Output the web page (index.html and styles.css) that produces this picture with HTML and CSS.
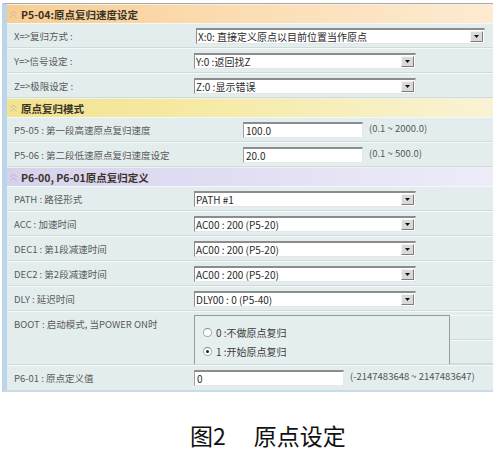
FILE: index.html
```html
<!DOCTYPE html>
<html>
<head>
<meta charset="utf-8">
<link rel="stylesheet" href="styles.css">
</head>
<body>
<div class="panel">
  <div class="hdr hdr-orange"><svg class="chev" width="7" height="8" viewBox="0 0 7 8"><polyline points="0.5,4 3.5,1 6.5,4" /><polyline points="0.5,7.5 3.5,4.5 6.5,7.5" /></svg>P5-04:原点复归速度设定</div>
  <div class="row"><div class="lbl">X=&gt;复归方式 :</div><div class="sel sel-wide"><span class="val">X:0: 直接定义原点以目前位置当作原点</span><span class="btn"><svg width="5" height="3" viewBox="0 0 5 3"><polygon points="0,0 5,0 2.5,3"/></svg></span></div></div>
  <div class="row"><div class="lbl">Y=&gt;信号设定 :</div><div class="sel"><span class="val">Y:0 :返回找Z</span><span class="btn"><svg width="5" height="3" viewBox="0 0 5 3"><polygon points="0,0 5,0 2.5,3"/></svg></span></div></div>
  <div class="row"><div class="lbl">Z=&gt;极限设定 :</div><div class="sel"><span class="val">Z:0 :显示错误</span><span class="btn"><svg width="5" height="3" viewBox="0 0 5 3"><polygon points="0,0 5,0 2.5,3"/></svg></span></div></div>
  <div class="hdr hdr-yellow"><svg class="chev" width="7" height="8" viewBox="0 0 7 8"><polyline points="0.5,4 3.5,1 6.5,4" /><polyline points="0.5,7.5 3.5,4.5 6.5,7.5" /></svg>原点复归模式</div>
  <div class="row"><div class="lbl lbl-long">P5-05 : 第一段高速原点复归速度</div><div class="inp inp-short">100.0</div><div class="range">(0.1 ~ 2000.0)</div></div>
  <div class="row"><div class="lbl lbl-long">P5-06 : 第二段低速原点复归速度设定</div><div class="inp inp-short">20.0</div><div class="range">(0.1 ~ 500.0)</div></div>
  <div class="hdr hdr-lav"><svg class="chev" width="7" height="8" viewBox="0 0 7 8"><polyline points="0.5,4 3.5,1 6.5,4" /><polyline points="0.5,7.5 3.5,4.5 6.5,7.5" /></svg>P6-00, P6-01原点复归定义</div>
  <div class="row"><div class="lbl">PATH : 路径形式</div><div class="sel"><span class="val">PATH #1</span><span class="btn"><svg width="5" height="3" viewBox="0 0 5 3"><polygon points="0,0 5,0 2.5,3"/></svg></span></div></div>
  <div class="row"><div class="lbl">ACC : 加速时间</div><div class="sel"><span class="val">AC00 : 200 (P5-20)</span><span class="btn"><svg width="5" height="3" viewBox="0 0 5 3"><polygon points="0,0 5,0 2.5,3"/></svg></span></div></div>
  <div class="row"><div class="lbl">DEC1 : 第1段减速时间</div><div class="sel"><span class="val">AC00 : 200 (P5-20)</span><span class="btn"><svg width="5" height="3" viewBox="0 0 5 3"><polygon points="0,0 5,0 2.5,3"/></svg></span></div></div>
  <div class="row"><div class="lbl">DEC2 : 第2段减速时间</div><div class="sel"><span class="val">AC00 : 200 (P5-20)</span><span class="btn"><svg width="5" height="3" viewBox="0 0 5 3"><polygon points="0,0 5,0 2.5,3"/></svg></span></div></div>
  <div class="row"><div class="lbl">DLY : 延迟时间</div><div class="sel"><span class="val">DLY00 : 0 (P5-40)</span><span class="btn"><svg width="5" height="3" viewBox="0 0 5 3"><polygon points="0,0 5,0 2.5,3"/></svg></span></div></div>
  <div class="row row-boot">
    <div class="lbl lbl-top">BOOT : 启动模式, 当POWER ON时</div>
    <div class="group">
      <div class="opt"><span class="radio"></span>0 :不做原点复归</div>
      <div class="opt"><span class="radio on"></span>1 :开始原点复归</div>
    </div>
    <div class="filler"><div class="fcell"></div><div class="fcell"></div></div>
  </div>
  <div class="row row-last"><div class="lbl">P6-01 : 原点定义值</div><div class="inp inp-mid">0</div><div class="range">(-2147483648 ~ 2147483647)</div></div>
</div>
<div class="caption">图2<span class="gap"></span>原点设定</div>
</body>
</html>
```

FILE: styles.css
```css
html, body {
  margin: 0;
  padding: 0;
  background: #ffffff;
}

body {
  width: 498px;
  height: 452px;
  overflow: hidden;
  font-family: "Noto Sans CJK SC", "DejaVu Sans", sans-serif;
}

.panel {
  margin: 3px 5px 0 2px;
  border-left: 5px solid #bcd5ea;
  border-top: 1px solid #a9a9a9;
  border-bottom: 2px solid #c9dcea;
  background: #e3eded;
}

.hdr {
  height: 19px;
  display: flex;
  align-items: center;
  padding-left: 3px;
  font-size: 10.5px;
  font-weight: bold;
  color: #3a3328;
  box-sizing: border-box;
  border-top: 1px solid #f5f0e6;
}

.chev {
  margin-right: 4px;
  fill: none;
  stroke: #c8b8a0;
  stroke-width: 1;
}

.hdr-orange {
  background: linear-gradient(to right, #f8cd92 0%, #fbdcb0 45%, #fdebd2 100%);
}

.hdr-yellow {
  background: linear-gradient(to right, #f2e390 0%, #f6eba8 45%, #f9f3d4 100%);
}

.hdr-lav {
  background: linear-gradient(to right, #d6d2ee 0%, #e2dff4 50%, #eeecf9 100%);
}

.hdr-lav .chev {
  stroke: #b8b0d0;
}

.row {
  height: 25px;
  box-sizing: border-box;
  display: flex;
  align-items: center;
  border-top: 1px solid #f4f8f8;
  border-bottom: 1px solid #cfdcdc;
  background: #e3eded;
  font-size: 9.5px;
  color: #5a5a5a;
}

.lbl {
  width: 187px;
  padding-left: 7px;
  box-sizing: border-box;
  flex: none;
  white-space: nowrap;
}

.lbl-long {
  width: 236px;
}

.sel {
  width: 222px;
  height: 16px;
  box-sizing: border-box;
  background: #ffffff;
  border-top: 2px solid #8c8c8c;
  border-left: 1px solid #8c8c8c;
  border-right: 1px solid #e6e6e6;
  border-bottom: 1px solid #e6e6e6;
  display: flex;
  align-items: center;
  justify-content: space-between;
  font-size: 10px;
  color: #2a2a2a;
}

.sel-wide {
  width: 289px;
  margin-left: 2px;
}

.val {
  padding-left: 1px;
  white-space: nowrap;
}

.btn {
  width: 13px;
  height: 11px;
  margin-right: 1px;
  box-sizing: border-box;
  background: #d9d9d9;
  border-top: 1px solid #f4f4f4;
  border-left: 1px solid #f4f4f4;
  border-right: 1px solid #7d7d7d;
  border-bottom: 1px solid #7d7d7d;
  display: flex;
  align-items: center;
  justify-content: center;
}

.btn svg {
  fill: #111111;
}

.inp {
  height: 16px;
  box-sizing: border-box;
  background: #ffffff;
  border-top: 2px solid #8c8c8c;
  border-left: 1px solid #a0a0a0;
  border-right: 1px solid #e8e8e8;
  border-bottom: 1px solid #e8e8e8;
  font-size: 10px;
  color: #2a2a2a;
  padding-left: 2px;
  display: flex;
  align-items: center;
}

.inp-short {
  width: 120px;
}

.inp-mid {
  width: 150px;
}

.range {
  margin-left: 6px;
  font-size: 9.5px;
  color: #555555;
  white-space: nowrap;
  margin-top: -4px;
}

.row-boot {
  height: 54px;
  align-items: stretch;
}

.lbl-top {
  padding-top: 5px;
}

.group {
  width: 256px;
  margin-top: 3px;
  box-sizing: border-box;
  border: 1px solid #9a9a9a;
  border-bottom: none;
  background: #e6efef;
  padding: 10px 0 0 8px;
  display: flex;
  flex-direction: column;
  gap: 6px;
  font-size: 10px;
  color: #3a3a3a;
}

.opt {
  display: flex;
  align-items: center;
  height: 13px;
}

.radio {
  width: 7px;
  height: 7px;
  border-radius: 50%;
  border: 1px solid #a8a8a8;
  border-top-color: #888;
  background: #ffffff;
  margin-right: 4px;
  position: relative;
}

.radio.on::after {
  content: "";
  position: absolute;
  left: 2px;
  top: 2px;
  width: 3px;
  height: 3px;
  border-radius: 50%;
  background: #222;
}

.filler {
  flex: 1;
  display: flex;
  flex-direction: column;
  margin-top: 3px;
}

.fcell {
  flex: 1;
  border-top: 1px solid #f4f8f8;
  border-bottom: 1px solid #cfdcdc;
}

.row-last {
  border-bottom: none;
}

.caption {
  margin-top: 29px;
  padding-left: 190px;
  font-size: 23px;
  line-height: 28px;
  color: #111111;
  white-space: nowrap;
}

.gap {
  display: inline-block;
  width: 28px;
}
```
